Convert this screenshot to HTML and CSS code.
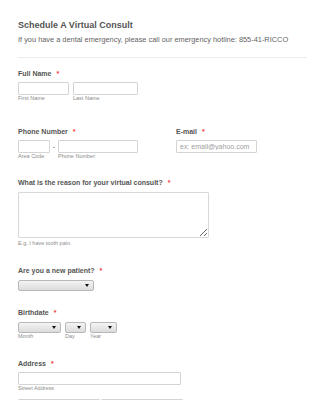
FILE: index.html
```html
<!DOCTYPE html>
<html>
<head>
    <title>Schedule A Virtual Consult</title>
    <link rel="stylesheet" href="styles.css">
</head>
<body>
    <form class="form-all">
        <div class="form-header">
            <h2>Schedule A Virtual Consult</h2>
            <p>If you have a dental emergency, please call our emergency hotline: 855-41-RICCO</p>
        </div>

        <div class="form-line line-name">
            <label class="form-label">Full Name <span class="req">*</span></label>
            <div class="inputs">
                <div class="sub-field">
                    <input type="text" class="w-first">
                    <span class="sublabel">First Name</span>
                </div>
                <div class="sub-field">
                    <input type="text" class="w-last">
                    <span class="sublabel">Last Name</span>
                </div>
            </div>
        </div>

        <div class="form-line line-phone">
            <div class="col-left">
                <label class="form-label">Phone Number <span class="req">*</span></label>
                <div class="inputs">
                    <div class="sub-field">
                        <input type="text" class="w-area">
                        <span class="sublabel">Area Code</span>
                    </div>
                    <span class="dash">-</span>
                    <div class="sub-field">
                        <input type="text" class="w-phone">
                        <span class="sublabel">Phone Number</span>
                    </div>
                </div>
            </div>
            <div class="col-right">
                <label class="form-label">E-mail <span class="req">*</span></label>
                <div class="inputs">
                    <input type="email" class="w-email" placeholder="ex: email@yahoo.com">
                </div>
            </div>
        </div>

        <div class="form-line line-reason">
            <label class="form-label label-gap">What is the reason for your virtual consult? <span class="req">*</span></label>
            <textarea class="reason"></textarea>
            <span class="sublabel hint">E.g. I have tooth pain.</span>
        </div>

        <div class="form-line line-patient">
            <label class="form-label label-gap">Are you a new patient? <span class="req">*</span></label>
            <div class="select-wrap w-patient">
                <select><option></option></select>
            </div>
        </div>

        <div class="form-line line-birth">
            <label class="form-label label-gap">Birthdate <span class="req">*</span></label>
            <div class="inputs">
                <div class="sub-field">
                    <div class="select-wrap w-month"><select><option></option></select></div>
                    <span class="sublabel">Month</span>
                </div>
                <div class="sub-field">
                    <div class="select-wrap w-day"><select><option></option></select></div>
                    <span class="sublabel">Day</span>
                </div>
                <div class="sub-field">
                    <div class="select-wrap w-year"><select><option></option></select></div>
                    <span class="sublabel">Year</span>
                </div>
            </div>
        </div>

        <div class="form-line line-address">
            <label class="form-label">Address <span class="req">*</span></label>
            <div class="sub-field">
                <input type="text" class="w-street">
                <span class="sublabel">Street Address</span>
            </div>
            <div class="inputs address-row">
                <input type="text" class="w-half">
                <input type="text" class="w-half">
            </div>
        </div>
    </form>
</body>
</html>
```

FILE: styles.css
```css
body {
    margin: 0;
    padding: 0;
    background: #ffffff;
    font-family: "Liberation Sans", Arial, sans-serif;
    color: #555555;
    overflow: hidden;
}

.form-all {
    padding: 0 18px;
}

.form-header {
    padding-top: 19px;
    padding-bottom: 12px;
    border-bottom: 1px solid #ececec;
}

.form-header h2 {
    margin: 0;
    font-size: 9px;
    line-height: 12px;
    font-weight: bold;
    color: #555555;
}

.form-header p {
    margin: 4px 0 0;
    font-size: 7.4px;
    line-height: 10px;
    color: #5f5f5f;
}

.form-line {
    display: block;
}

.line-name { margin-top: 11px; }
.line-phone { margin-top: 25px; display: flex; }
.line-reason { margin-top: 18px; }
.line-patient { margin-top: 19px; }
.line-birth { margin-top: 17px; }
.line-address { margin-top: 19px; }

.col-left {
    width: 158px;
}

.form-label {
    display: block;
    font-size: 7px;
    line-height: 10px;
    font-weight: bold;
    color: #555555;
    margin-bottom: 3px;
}

.label-gap {
    margin-bottom: 4px;
}

.req {
    color: #f23a3c;
    margin-left: 3px;
}

.inputs {
    display: flex;
    align-items: flex-start;
}

.sub-field {
    display: flex;
    flex-direction: column;
    margin-right: 4px;
}

.sublabel {
    display: block;
    font-size: 5.5px;
    line-height: 7px;
    color: #8c8c8c;
}

.hint {
    margin-top: 2px;
}

input {
    box-sizing: border-box;
    height: 13px;
    margin: 0;
    padding: 0 3px;
    border: 1px solid #d4d4d4;
    border-radius: 1px;
    font-family: "Liberation Sans", Arial, sans-serif;
    font-size: 7px;
    color: #555555;
    background: #ffffff;
}

input::placeholder {
    color: #a0a0a0;
}

.w-first { width: 51px; }
.w-last { width: 65px; }
.w-area { width: 32px; }
.w-phone { width: 80px; }
.w-email { width: 81px; }
.w-street { width: 163px; }
.w-half { width: 82px; }

.line-phone .sub-field {
    margin-right: 0;
}

.dash {
    font-size: 7px;
    line-height: 13px;
    width: 8px;
    text-align: center;
    color: #555555;
}

.address-row {
    margin-top: 7px;
    gap: 1px;
}

textarea {
    display: block;
    box-sizing: border-box;
    width: 191px;
    height: 46px;
    margin: 0;
    border: 1px solid #d8d8d8;
    border-radius: 1px;
    font-size: 7px;
}

.select-wrap {
    position: relative;
    box-sizing: border-box;
    height: 11px;
    border: 1px solid #b8b8b8;
    border-radius: 2px;
    background:
        radial-gradient(circle, rgba(0, 0, 0, 0.07) 0.5px, transparent 0.6px) 0 0 / 2px 2px,
        linear-gradient(#f4f4f4, #dcdcdc);
}

.select-wrap select {
    width: 100%;
    height: 100%;
    margin: 0;
    padding: 0;
    border: none;
    background: transparent;
    -webkit-appearance: none;
    appearance: none;
    font-size: 6px;
}

.select-wrap::after {
    content: "";
    position: absolute;
    right: 4px;
    top: 3px;
    border-left: 2px solid transparent;
    border-right: 2px solid transparent;
    border-top: 3px solid #111111;
}

.w-patient { width: 76px; }
.w-month { width: 43px; }
.w-day { width: 21px; }
.w-year { width: 27px; }

.line-birth .sub-field:first-child { margin-right: 4px; }
.line-birth .sub-field:nth-child(2) { margin-right: 4px; }
```
